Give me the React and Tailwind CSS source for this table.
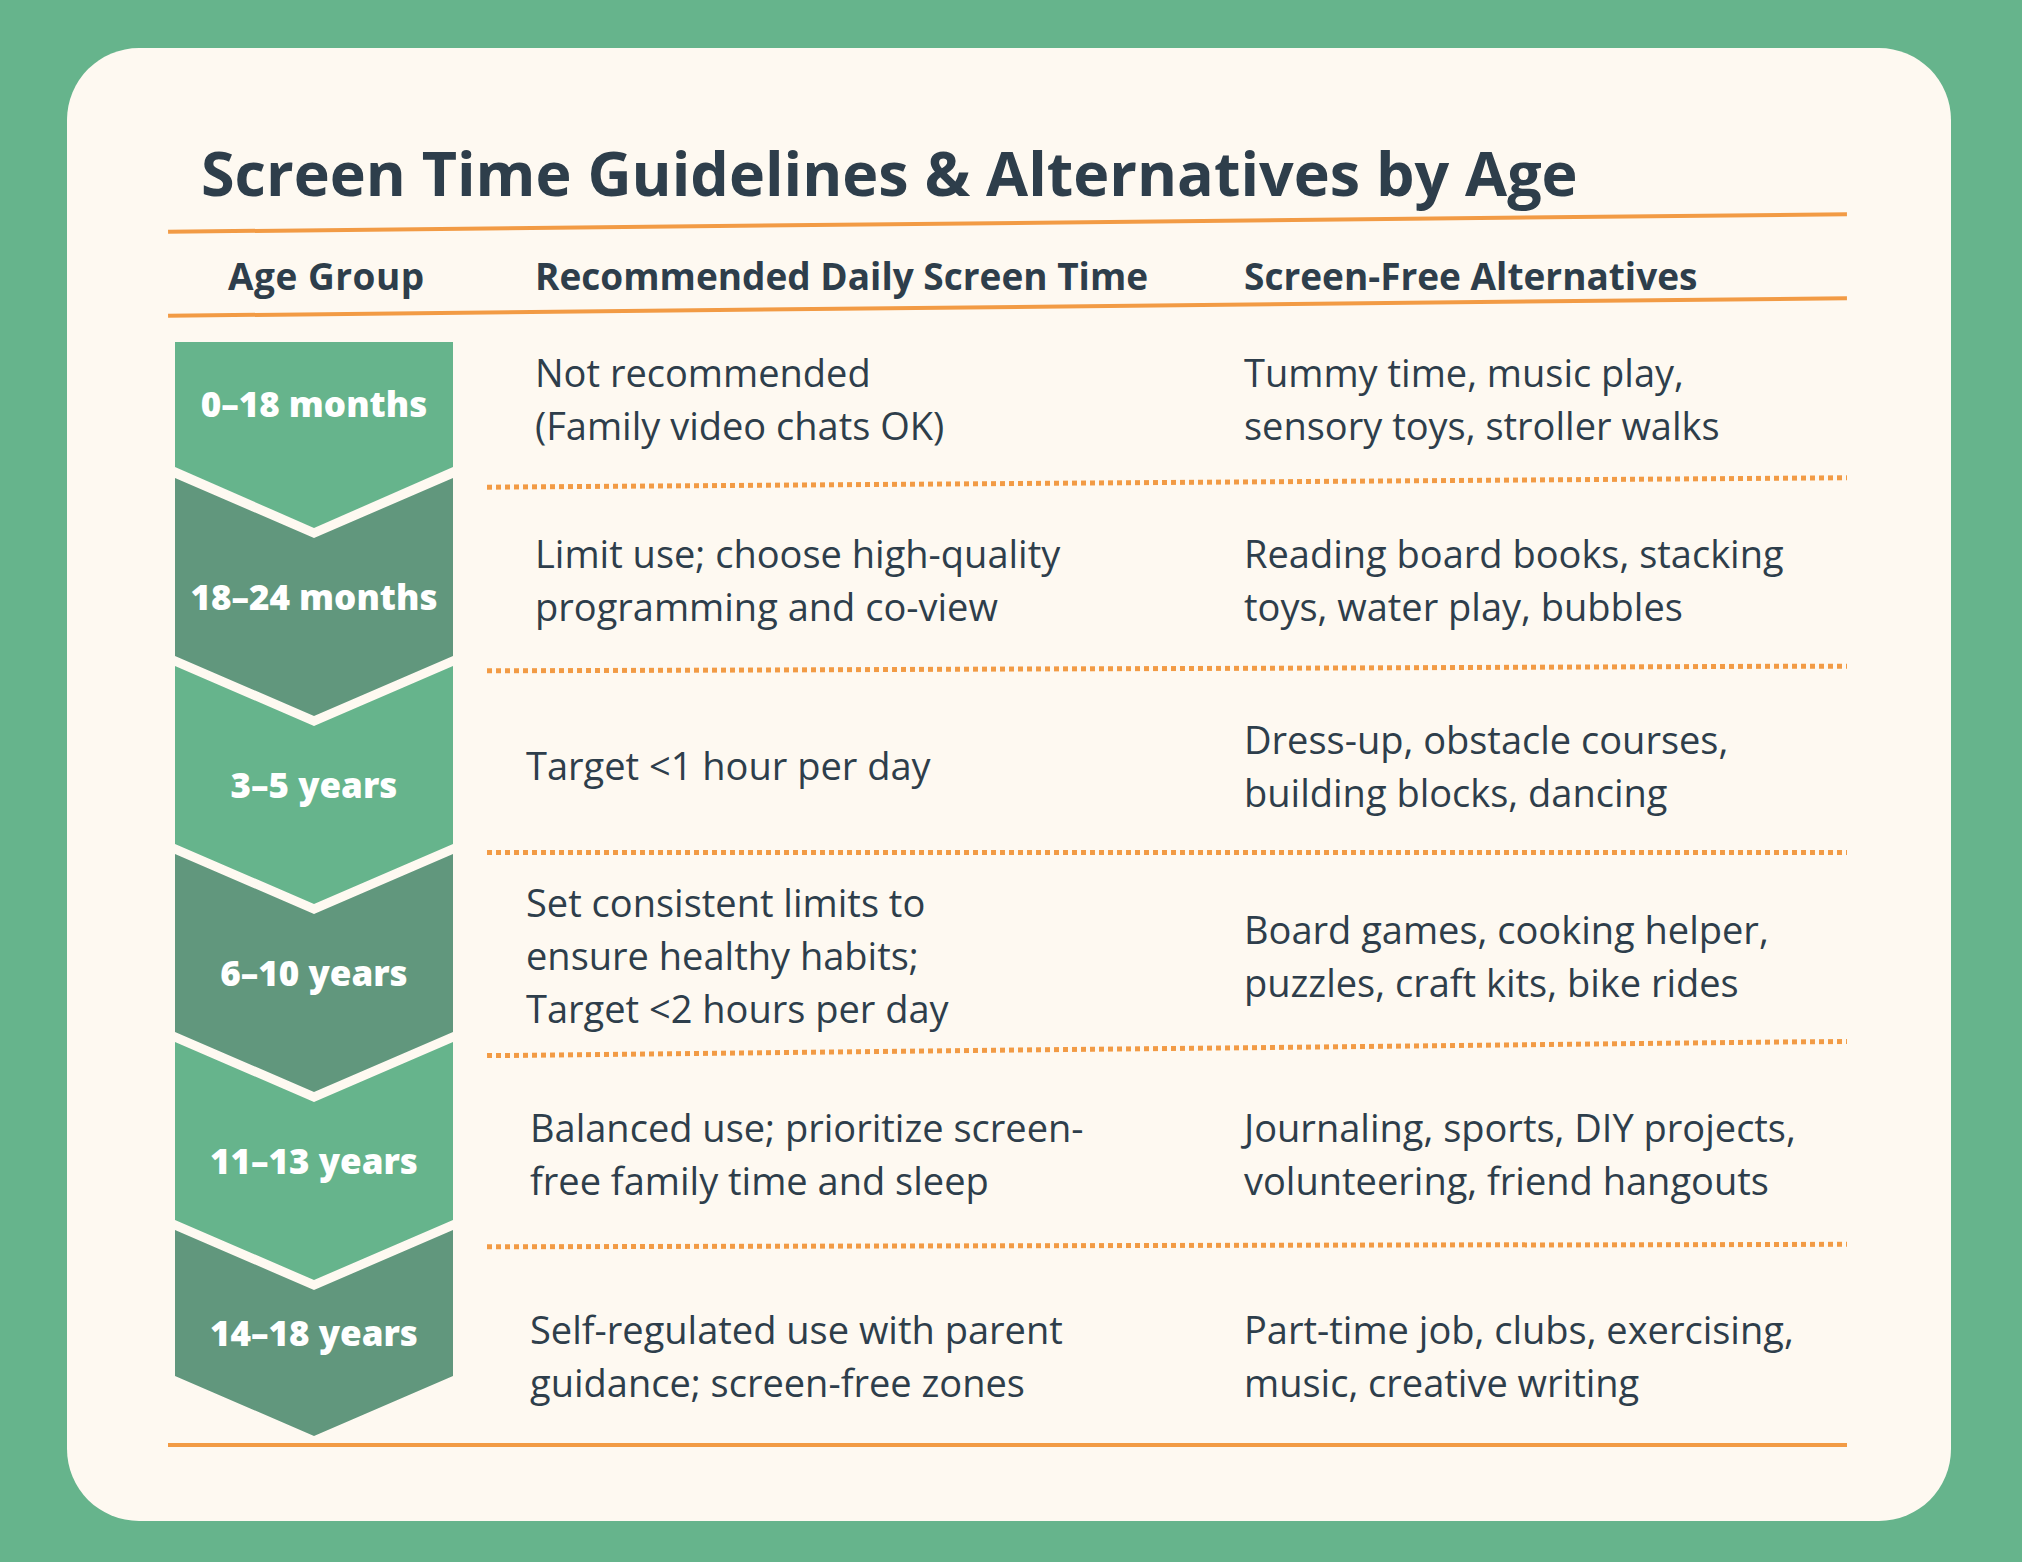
import React from "react";

const ages = [
  {
    label: "0–18 months",
    shape: "h-[186px] bg-[#66b48c] [clip-path:polygon(0_0,100%_0,100%_125px,50%_100%,0_125px)]",
    box: "h-[125px]",
  },
  {
    label: "18–24 months",
    shape: "-mt-[50px] h-[238px] bg-[#61977d] [clip-path:polygon(0_0,50%_60px,100%_0,100%_178px,50%_100%,0_178px)]",
    box: "mt-[60px] h-[118px]",
  },
  {
    label: "3–5 years",
    shape: "-mt-[50px] h-[238px] bg-[#66b48c] [clip-path:polygon(0_0,50%_60px,100%_0,100%_178px,50%_100%,0_178px)]",
    box: "mt-[60px] h-[118px]",
  },
  {
    label: "6–10 years",
    shape: "-mt-[50px] h-[238px] bg-[#61977d] [clip-path:polygon(0_0,50%_60px,100%_0,100%_178px,50%_100%,0_178px)]",
    box: "mt-[60px] h-[118px]",
  },
  {
    label: "11–13 years",
    shape: "-mt-[50px] h-[238px] bg-[#66b48c] [clip-path:polygon(0_0,50%_60px,100%_0,100%_178px,50%_100%,0_178px)]",
    box: "mt-[60px] h-[118px]",
  },
  {
    label: "14–18 years",
    shape: "-mt-[50px] h-[206px] bg-[#61977d] [clip-path:polygon(0_0,50%_60px,100%_0,100%_146px,50%_100%,0_146px)]",
    box: "mt-[60px] h-[86px]",
  },
];

const rows = [
  {
    h: "h-[171px] pt-[8px]",
    indent: "pl-[48px]",
    time: ["Not recommended", "(Family video chats OK)"],
    alt: ["Tummy time, music play,", "sensory toys, stroller walks"],
    line: "-rotate-[0.4deg]",
  },
  {
    h: "h-[181px] pt-[8px]",
    indent: "pl-[48px]",
    time: ["Limit use; choose high-quality", "programming and co-view"],
    alt: ["Reading board books, stacking", "toys, water play, bubbles"],
    line: "-rotate-[0.2deg]",
  },
  {
    h: "h-[179px] pt-[10px]",
    indent: "pl-[39px]",
    time: ["Target <1 hour per day"],
    alt: ["Dress-up, obstacle courses,", "building blocks, dancing"],
    line: "rotate-0",
  },
  {
    h: "h-[191px] pt-[10px]",
    indent: "pl-[39px]",
    time: ["Set consistent limits to", "ensure healthy habits;", "Target <2 hours per day"],
    alt: ["Board games, cooking helper,", "puzzles, craft kits, bike rides"],
    line: "-rotate-[0.6deg]",
  },
  {
    h: "h-[192px] pt-[13px]",
    indent: "pl-[43px]",
    time: ["Balanced use; prioritize screen-", "free family time and sleep"],
    alt: ["Journaling, sports, DIY projects,", "volunteering, friend hangouts"],
    line: "-rotate-[0.1deg]",
  },
  {
    h: "h-[195px] pt-[20px]",
    indent: "pl-[43px]",
    time: ["Self-regulated use with parent", "guidance; screen-free zones"],
    alt: ["Part-time job, clubs, exercising,", "music, creative writing"],
    line: null,
  },
];

function Lines({ items }) {
  return (
    <div>
      {items.map((t) => (
        <div key={t}>{t}</div>
      ))}
    </div>
  );
}

export default function App() {
  return (
    <div className="h-[1562px] w-full bg-[#66b48c] pt-[48px] pl-[67px] pr-[71px] pb-[41px] font-['Open_Sans',sans-serif] text-[#2e3e4b]">
      <div className="h-[1473px] w-[1884px] rounded-[72px] bg-[#fef9f1] pt-[94px] pl-[101px] pr-[104px]">
        <h1 className="pl-[33px] text-[61px] font-bold leading-none">
          Screen Time Guidelines &amp; Alternatives by Age
        </h1>

        <div className="mt-[18px] h-[4px] -rotate-[0.6deg] bg-[#f29b45]" />

        <div className="flex h-[80px] pt-[32px] text-[37px] font-bold leading-[37px]">
          <div className="w-[319px] pl-[60px] tracking-[0.5px]">Age Group</div>
          <div className="w-[757px] pl-[48px]">Recommended Daily Screen Time</div>
          <div>Screen-Free Alternatives</div>
        </div>

        <div className="h-[4px] -rotate-[0.6deg] bg-[#f29b45]" />

        <div className="flex h-[1134px]">
          <div className="w-[319px] pl-[7px] pt-[33px]">
            <div className="flex w-[278px] flex-col">
              {ages.map((a) => (
                <div key={a.label} className={a.shape}>
                  <div className={`flex items-center justify-center text-[35px] font-extrabold text-white ${a.box}`}>
                    {a.label}
                  </div>
                </div>
              ))}
            </div>
          </div>

          <div className="flex w-[1360px] flex-col">
            {rows.map((r, i) => (
              <React.Fragment key={i}>
                <div className={`flex items-center text-[38px] leading-[53px] ${r.h}`}>
                  <div className={`w-[757px] ${r.indent}`}>
                    <Lines items={r.time} />
                  </div>
                  <Lines items={r.alt} />
                </div>
                {r.line && (
                  <div
                    className={`h-[5px] bg-[repeating-linear-gradient(90deg,#f29b45_0_5px,transparent_5px_9px)] ${r.line}`}
                  />
                )}
              </React.Fragment>
            ))}
          </div>
        </div>

        <div className="h-[4px] bg-[#f29b45]" />
      </div>
    </div>
  );
}
